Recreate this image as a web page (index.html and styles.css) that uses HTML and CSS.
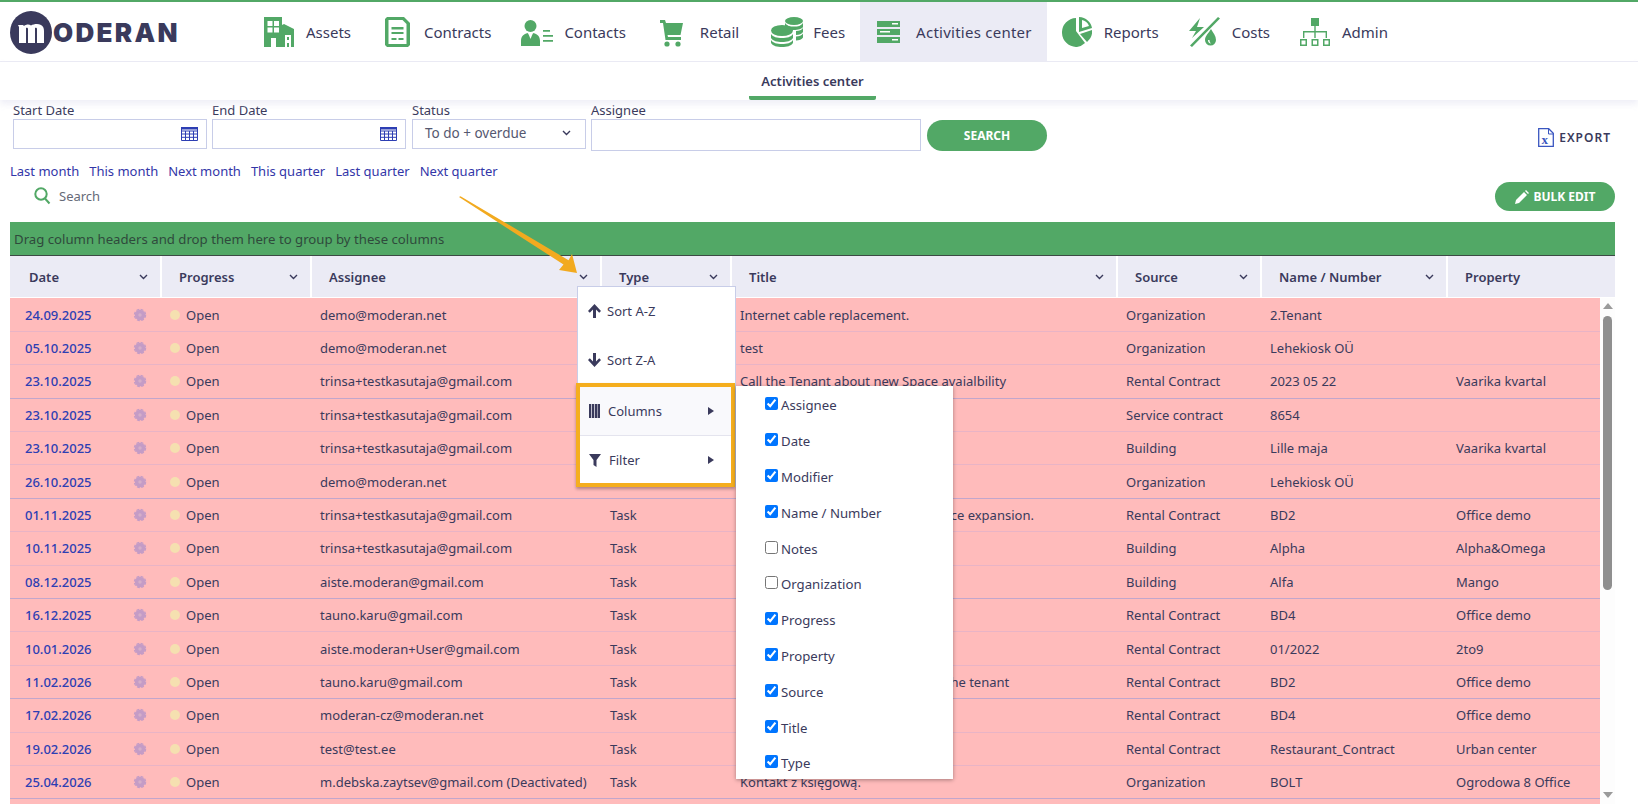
FILE: index.html
```html
<!DOCTYPE html>
<html lang="en">
<head>
    <meta charset="UTF-8">
    <meta name="viewport" content="width=device-width, initial-scale=1.0">
    <title>Activities center</title>
    <link rel="stylesheet" href="styles.css">
</head>
<body>
    <svg class="defs">
        <symbol id="chev" viewBox="0 0 9 6"><path d="M1 1l3.500 3.500L8 1" fill="none" stroke="#3a3a5c" stroke-width="1.400"/></symbol>
        <symbol id="gear" viewBox="0 0 14 14"><circle cx="7" cy="7" r="5.200" fill="#c49cc6"/><circle cx="7" cy="7" r="5.600" fill="none" stroke="#c49cc6" stroke-width="1.300" stroke-dasharray="2.900 1.500"/><circle cx="7" cy="7" r="1.700" fill="#d6aec8"/></symbol>
    </svg>

    <header class="topbar">
        <a class="logo">
            <svg width="42" height="43" viewBox="0 0 42 43"><ellipse cx="21" cy="21.500" rx="21" ry="21.500" fill="#3a3a5c"/><path d="M8 14h5l1 1c2-1.500 5-2 7-.5 3-1.500 7-2 10-.5 2 1 3 3 3 6v12h-7V18c0-1-1-1.500-2-1v15h-7V18c0-1-1-1.500-2-1v15H9V16z" fill="#fff"/></svg>
            <span class="logo-text">ODERAN</span>
        </a>
        <nav class="mainnav">
            <a class="nav-item">
                <svg class="nav-icon" width="30" height="30" viewBox="0 0 30 30"><path d="M0 0h18v8l2-1 10 5v18H0z" fill="#52a866"/><path d="M3.500 4h5v5h-5zM10 4h5v5h-5zM3.500 10.500h5v5h-5zM10 10.500h5v5h-5zM7 21h5v9H7zM21 18h6v12h-2v-4h-2v4h-2zM23 20v3h2v-3z" fill="#fff"/></svg>
                <span>Assets</span>
            </a>
            <a class="nav-item ni-contracts">
                <svg class="nav-icon" width="25" height="30" viewBox="0 0 25 30"><path d="M2 0h17l6 6v22l-2 2H2l-2-2V2z" fill="#52a866"/><path d="M3.500 3h14l4 4v20h-18z" fill="#fff"/><path d="M6.500 10h12v2.500h-12zM6.500 15h12v2h-12zM6.500 21h5v2h-5zM13.500 21h5v2h-5z" fill="#52a866"/></svg>
                <span>Contracts</span>
            </a>
            <a class="nav-item ni-contacts">
                <svg class="nav-icon" width="32" height="30" viewBox="0 0 32 30"><circle cx="9.500" cy="9" r="6" fill="#52a866"/><path d="M0 29v-5c0-5 3-7 6.500-8l3 3 3-3c3.500 1 6.500 3 6.500 8v5z" fill="#52a866"/><path d="M7.500 17h4l-2 5z" fill="#fff"/><path d="M22 13h7v1.800h-7zM22 18h10v1.800H22zM22 23h10v1.800H22z" fill="#52a866"/></svg>
                <span>Contacts</span>
            </a>
            <a class="nav-item ni-retail">
                <svg class="nav-icon" width="23" height="30" viewBox="0 0 23 30"><path d="M0 3h5l1 3h17l-2.500 12H7.500l.5 2h13v3H5.500L3 6H0z" fill="#52a866"/><circle cx="7" cy="27" r="2.600" fill="#52a866"/><circle cx="18" cy="27" r="2.600" fill="#52a866"/></svg>
                <span>Retail</span>
            </a>
            <a class="nav-item ni-fees">
                <svg class="nav-icon" width="33" height="30" viewBox="0 0 33 30"><ellipse cx="23" cy="4" rx="9" ry="4" fill="#52a866"/><path d="M14 6v4c2 2.500 5 3 9 3s8-1 9-3V6c-2 3-5 3.500-9 3.500S16 9 14 6zM25 14v4c3 0 6-1 7-3v-4c-1 2-4 3-7 3zM25 19.500v4c3 0 6-1 7-3v-4c-1 2-4 3-7 3z" fill="#52a866"/><ellipse cx="11" cy="13.500" rx="11" ry="5.500" fill="#52a866"/><path d="M0 17c2 3 6 4 11 4s9-1 11-4v4c-2 3-6 4-11 4S2 24 0 21zM0 23c2 3 6 4 11 4s9-1 11-4v3c-2 3-6 4-11 4S2 29 0 26z" fill="#52a866"/></svg>
                <span>Fees</span>
            </a>
            <a class="nav-item nav-active">
                <svg class="nav-icon" width="23" height="23" viewBox="0 0 23 23"><path d="M0 1h23v6H0zM0 9h23v6H0zM0 17h23v6H0z" fill="#52a866"/><path d="M15 3h6v1.500h-6zM3 11h10v1.500H3zM15 19h6v1.500h-6z" fill="#fff"/></svg>
                <span>Activities center</span>
            </a>
            <a class="nav-item">
                <svg class="nav-icon" width="30" height="30" viewBox="0 0 30 30"><path d="M14 1v13l9 12a15 15 0 0 1-8 4A14.500 14.500 0 0 1 14 1z" fill="#52a866"/><path d="M17 0c7 .5 12 5 13 11l-13 4zM20 3v8l7-2c-1-3-4-5.500-7-6z" fill="#52a866" fill-rule="evenodd"/><path d="M18 17l12-4c.5 4-.5 8-5 12z" fill="#52a866"/></svg>
                <span>Reports</span>
            </a>
            <a class="nav-item">
                <svg class="nav-icon" width="31" height="30" viewBox="0 0 31 30"><path d="M11 1L0 14h7l-4 7 12-11H8zM29 0l2 1.500L3 30l-2-1.500z" fill="#52a866"/><path d="M22 12c2 3.500 5 7 5 11a5.500 5.500 0 0 1-11 0c0-4 4-7.500 6-11zm-3 11c0 2 1 3.500 3 3.500-1-1-1.500-2-1.500-3.500z" fill="#52a866" fill-rule="evenodd"/></svg>
                <span>Costs</span>
            </a>
            <a class="nav-item">
                <svg class="nav-icon" width="30" height="30" viewBox="0 0 30 30"><path d="M11 1h8v8h-8zM14.300 9h1.400v5H27v7h-1.400v-5.600H15.700V21h-1.400v-5.600H4.400V21H3v-7h11.300z" fill="#52a866"/><path d="M0 22h7v7H0zM1.500 23.500v4h4v-4zM11.500 22h7v7h-7zM13 23.500v4h4v-4zM23 22h7v7h-7zM24.500 23.500v4h4v-4z" fill="#52a866" fill-rule="evenodd"/></svg>
                <span>Admin</span>
            </a>
        </nav>
    </header>

    <div class="subbar">
        <a class="subtab">Activities center</a>
    </div>

    <main class="content">
        <form class="filters">
            <div class="field date-field">
                <label>Start Date</label>
                <div class="date-input">
                    <input type="text">
                    <svg class="cal" width="17" height="14" viewBox="0 0 17 14"><path d="M.5.5h16v13H.5zM.5 4h16M.5 7h16M.5 10.300h16M4.500 4v9.500M8.500 4v9.500M12.500 4v9.500" fill="none" stroke="#2d3eb3"/><path d="M0 0h17v2.500H0z" fill="#2d3eb3"/></svg>
                </div>
            </div>
            <div class="field date-field">
                <label>End Date</label>
                <div class="date-input">
                    <input type="text">
                    <svg class="cal" width="17" height="14" viewBox="0 0 17 14"><path d="M.5.5h16v13H.5zM.5 4h16M.5 7h16M.5 10.300h16M4.500 4v9.500M8.500 4v9.500M12.500 4v9.500" fill="none" stroke="#2d3eb3"/><path d="M0 0h17v2.500H0z" fill="#2d3eb3"/></svg>
                </div>
            </div>
            <div class="field status-field">
                <label>Status</label>
                <div class="status-select">
                    <span>To do + overdue</span>
                    <svg width="9" height="6"><use href="#chev"/></svg>
                </div>
            </div>
            <div class="field assignee-field">
                <label>Assignee</label>
                <input type="text">
            </div>
            <button type="button" class="btn-search">SEARCH</button>
            <a class="export">
                <svg width="16" height="19" viewBox="0 0 16 19"><path d="M.7.7h10l4.600 4.600v13H.7z" fill="#fff" stroke="#3a56c0" stroke-width="1.300"/><path d="M10.500 1v5h5" fill="none" stroke="#3a56c0"/><text x="3.500" y="16" class="export-x">x</text></svg>
                <span>EXPORT</span>
            </a>
        </form>

        <div class="quick-links">
            <a>Last month</a>
            <a>This month</a>
            <a>Next month</a>
            <a>This quarter</a>
            <a>Last quarter</a>
            <a>Next quarter</a>
        </div>

        <div class="toolbar">
            <div class="grid-search">
                <svg width="17" height="18" viewBox="0 0 17 18"><circle cx="7" cy="7" r="5.700" fill="none" stroke="#52a866" stroke-width="2"/><path d="M11 11.500l4.500 5" stroke="#52a866" stroke-width="2"/></svg>
                <span>Search</span>
            </div>
            <button type="button" class="btn-bulk">
                <svg width="14" height="14" viewBox="0 0 14 14"><path d="M0 14l1-4 8-8 3 3-8 8zM10 1l1-1 3 3-1 1z" fill="#fff"/></svg>
                BULK EDIT
            </button>
        </div>

        <section class="grid">
            <div class="group-bar">Drag column headers and drop them here to group by these columns</div>
            <div class="grid-head">
                <div class="th"><span>Date</span><svg width="9" height="6"><use href="#chev"/></svg></div>
                <div class="th"><span>Progress</span><svg width="9" height="6"><use href="#chev"/></svg></div>
                <div class="th"><span>Assignee</span><svg width="9" height="6"><use href="#chev"/></svg></div>
                <div class="th"><span>Type</span><svg width="9" height="6"><use href="#chev"/></svg></div>
                <div class="th"><span>Title</span><svg width="9" height="6"><use href="#chev"/></svg></div>
                <div class="th"><span>Source</span><svg width="9" height="6"><use href="#chev"/></svg></div>
                <div class="th"><span>Name / Number</span><svg width="9" height="6"><use href="#chev"/></svg></div>
                <div class="th"><span>Property</span></div>
            </div>
            <div class="grid-body">
                <div class="rows">
                    <div class="row"><div class="td date"><a>24.09.2025</a><svg width="14" height="14"><use href="#gear"/></svg></div><div class="td progress"><i class="dot"></i>Open</div><div class="td">demo@moderan.net</div><div class="td"></div><div class="td">Internet cable replacement.</div><div class="td">Organization</div><div class="td">2.Tenant</div><div class="td"></div></div>
                    <div class="row"><div class="td date"><a>05.10.2025</a><svg width="14" height="14"><use href="#gear"/></svg></div><div class="td progress"><i class="dot"></i>Open</div><div class="td">demo@moderan.net</div><div class="td"></div><div class="td">test</div><div class="td">Organization</div><div class="td">Lehekiosk OÜ</div><div class="td"></div></div>
                    <div class="row"><div class="td date"><a>23.10.2025</a><svg width="14" height="14"><use href="#gear"/></svg></div><div class="td progress"><i class="dot"></i>Open</div><div class="td">trinsa+testkasutaja@gmail.com</div><div class="td"></div><div class="td">Call the Tenant about new Space avaialbility</div><div class="td">Rental Contract</div><div class="td">2023 05 22</div><div class="td">Vaarika kvartal</div></div>
                    <div class="row"><div class="td date"><a>23.10.2025</a><svg width="14" height="14"><use href="#gear"/></svg></div><div class="td progress"><i class="dot"></i>Open</div><div class="td">trinsa+testkasutaja@gmail.com</div><div class="td"></div><div class="td"></div><div class="td">Service contract</div><div class="td">8654</div><div class="td"></div></div>
                    <div class="row"><div class="td date"><a>23.10.2025</a><svg width="14" height="14"><use href="#gear"/></svg></div><div class="td progress"><i class="dot"></i>Open</div><div class="td">trinsa+testkasutaja@gmail.com</div><div class="td"></div><div class="td"></div><div class="td">Building</div><div class="td">Lille maja</div><div class="td">Vaarika kvartal</div></div>
                    <div class="row"><div class="td date"><a>26.10.2025</a><svg width="14" height="14"><use href="#gear"/></svg></div><div class="td progress"><i class="dot"></i>Open</div><div class="td">demo@moderan.net</div><div class="td"></div><div class="td"></div><div class="td">Organization</div><div class="td">Lehekiosk OÜ</div><div class="td"></div></div>
                    <div class="row"><div class="td date"><a>01.11.2025</a><svg width="14" height="14"><use href="#gear"/></svg></div><div class="td progress"><i class="dot"></i>Open</div><div class="td">trinsa+testkasutaja@gmail.com</div><div class="td">Task</div><div class="td">Call the Tenant about an office space expansion.</div><div class="td">Rental Contract</div><div class="td">BD2</div><div class="td">Office demo</div></div>
                    <div class="row"><div class="td date"><a>10.11.2025</a><svg width="14" height="14"><use href="#gear"/></svg></div><div class="td progress"><i class="dot"></i>Open</div><div class="td">trinsa+testkasutaja@gmail.com</div><div class="td">Task</div><div class="td"></div><div class="td">Building</div><div class="td">Alpha</div><div class="td">Alpha&amp;Omega</div></div>
                    <div class="row"><div class="td date"><a>08.12.2025</a><svg width="14" height="14"><use href="#gear"/></svg></div><div class="td progress"><i class="dot"></i>Open</div><div class="td">aiste.moderan@gmail.com</div><div class="td">Task</div><div class="td"></div><div class="td">Building</div><div class="td">Alfa</div><div class="td">Mango</div></div>
                    <div class="row"><div class="td date"><a>16.12.2025</a><svg width="14" height="14"><use href="#gear"/></svg></div><div class="td progress"><i class="dot"></i>Open</div><div class="td">tauno.karu@gmail.com</div><div class="td">Task</div><div class="td"></div><div class="td">Rental Contract</div><div class="td">BD4</div><div class="td">Office demo</div></div>
                    <div class="row"><div class="td date"><a>10.01.2026</a><svg width="14" height="14"><use href="#gear"/></svg></div><div class="td progress"><i class="dot"></i>Open</div><div class="td">aiste.moderan+User@gmail.com</div><div class="td">Task</div><div class="td"></div><div class="td">Rental Contract</div><div class="td">01/2022</div><div class="td">2to9</div></div>
                    <div class="row"><div class="td date"><a>11.02.2026</a><svg width="14" height="14"><use href="#gear"/></svg></div><div class="td progress"><i class="dot"></i>Open</div><div class="td">tauno.karu@gmail.com</div><div class="td">Task</div><div class="td">Send the contract renewal info to the tenant</div><div class="td">Rental Contract</div><div class="td">BD2</div><div class="td">Office demo</div></div>
                    <div class="row"><div class="td date"><a>17.02.2026</a><svg width="14" height="14"><use href="#gear"/></svg></div><div class="td progress"><i class="dot"></i>Open</div><div class="td">moderan-cz@moderan.net</div><div class="td">Task</div><div class="td"></div><div class="td">Rental Contract</div><div class="td">BD4</div><div class="td">Office demo</div></div>
                    <div class="row"><div class="td date"><a>19.02.2026</a><svg width="14" height="14"><use href="#gear"/></svg></div><div class="td progress"><i class="dot"></i>Open</div><div class="td">test@test.ee</div><div class="td">Task</div><div class="td"></div><div class="td">Rental Contract</div><div class="td">Restaurant_Contract</div><div class="td">Urban center</div></div>
                    <div class="row"><div class="td date"><a>25.04.2026</a><svg width="14" height="14"><use href="#gear"/></svg></div><div class="td progress"><i class="dot"></i>Open</div><div class="td">m.debska.zaytsev@gmail.com (Deactivated)</div><div class="td">Task</div><div class="td">Kontakt z księgową.</div><div class="td">Organization</div><div class="td">BOLT</div><div class="td">Ogrodowa 8 Office</div></div>
                    <div class="row"></div>
                </div>
                <div class="scrollbar">
                    <i class="sb-up"></i>
                    <i class="sb-thumb"></i>
                    <i class="sb-down"></i>
                </div>
            </div>

            <div class="col-menu">
                <a class="menu-item"><svg width="13" height="14" viewBox="0 0 13 14"><path d="M6.500 0L13 7l-1.800 1.800L8 5.500V14H5V5.500L1.800 8.800 0 7z" fill="#3a3a5c"/></svg>Sort A-Z</a>
                <a class="menu-item menu-lower"><svg width="13" height="14" viewBox="0 0 13 14"><path d="M6.500 14L13 7l-1.800-1.800L8 8.500V0H5v8.500L1.800 5.200 0 7z" fill="#3a3a5c"/></svg>Sort Z-A</a>
                <div class="menu-marked">
                    <a class="menu-item menu-sub menu-hover"><svg width="11" height="14" viewBox="0 0 11 14"><path d="M0 0h2.300v14H0zM3 0h2.300v14H3zM6 0h2.300v14H6zM8.800 0H11v14H8.800z" fill="#3a3a5c"/></svg>Columns<i class="caret"></i></a>
                    <a class="menu-item menu-sub"><svg width="12" height="14" viewBox="0 0 12 14"><path d="M0 1h12L7.500 7v7l-3-2V7z" fill="#3a3a5c"/></svg>Filter<i class="caret"></i></a>
                </div>
            </div>

            <div class="col-list">
                <label><input type="checkbox" checked>Assignee</label>
                <label><input type="checkbox" checked>Date</label>
                <label><input type="checkbox" checked>Modifier</label>
                <label><input type="checkbox" checked>Name / Number</label>
                <label><input type="checkbox">Notes</label>
                <label><input type="checkbox">Organization</label>
                <label><input type="checkbox" checked>Progress</label>
                <label><input type="checkbox" checked>Property</label>
                <label><input type="checkbox" checked>Source</label>
                <label><input type="checkbox" checked>Title</label>
                <label><input type="checkbox" checked>Type</label>
            </div>
        </section>
    </main>

    <svg class="callout" width="130" height="85" viewBox="455 195 130 85"><path d="M459 197l1.500-.8 108 64 3.500-6.200 5 19-18-3 4.500-5.500z" fill="#f2aa1f"/></svg>
</body>
</html>
```

FILE: styles.css
```css
* {
    box-sizing: border-box;
}

html, body {
    height: 804px;
    overflow: hidden;
}

body {
    margin: 0;
    background-color: #fff;
    color: #3a3a5c;
    font-family: "Noto Sans", sans-serif;
    font-size: 13px;
}

.defs {
    position: absolute;
    width: 0;
    height: 0;
}

/* top navigation */
.topbar {
    display: flex;
    height: 62px;
    border-top: 2px solid #52a866;
    border-bottom: 1px solid #ebebf5;
}

.logo {
    display: flex;
    align-items: center;
    width: 249px;
    padding: 5px 0 0 10px;
    height: 56px;
}

.logo-text {
    font-family: Inter, sans-serif;
    font-size: 26px;
    font-weight: 900;
    line-height: 1;
    letter-spacing: 2.3px;
    margin-left: 1px;
}

.mainnav {
    display: flex;
}

.nav-item {
    display: flex;
    align-items: center;
    padding: 0 15px;
    font-size: 15px;
}

.nav-icon {
    margin-right: 12px;
    flex: none;
}

.ni-contracts .nav-icon {
    margin-left: 4px;
    margin-right: 14px;
}

.ni-contacts .nav-icon {
    margin-right: 11px;
}

.ni-retail .nav-icon {
    margin-left: 4px;
    margin-right: 17px;
}

.ni-fees .nav-icon {
    margin-left: 2px;
    margin-right: 9px;
}

.nav-active {
    background-color: #ebebf5;
    letter-spacing: 0.25px;
}

.nav-active .nav-icon {
    margin-left: 2px;
    margin-right: 16px;
}

.subbar {
    display: flex;
    justify-content: center;
    height: 38px;
    padding-right: 13px;
    box-shadow: 0 4px 6px rgba(235, 235, 245, 0.8);
    position: relative;
}

.subtab {
    width: 127px;
    padding-top: 10px;
    border-bottom: 4px solid #52a866;
    border-radius: 0 0 2px 2px;
    text-align: center;
    font-size: 13px;
    font-weight: 600;
}

/* filter form */
.content {
    padding: 1px 23px 0 10px;
}

.filters {
    display: flex;
    align-items: flex-end;
    padding-left: 3px;
    height: 50px;
}

.field label {
    display: block;
    height: 18px;
    line-height: 18px;
}

.field input {
    display: block;
    width: 100%;
    height: 30px;
    border: 1px solid #c8cde8;
    outline: none;
}

.date-field {
    width: 194px;
    margin-right: 5px;
    margin-bottom: 2px;
}

.date-input {
    position: relative;
}

.cal {
    position: absolute;
    right: 9px;
    top: 8px;
}

.status-field {
    width: 174px;
    margin-left: 1px;
    margin-right: 5px;
    margin-bottom: 2px;
}

.status-select {
    display: flex;
    align-items: center;
    justify-content: space-between;
    height: 30px;
    padding: 0 14px 2px 12px;
    border: 1px solid #c8cde8;
    color: #555870;
    font-size: 13.5px;
}

.assignee-field {
    width: 330px;
}

.assignee-field input {
    height: 32px;
}

.btn-search {
    width: 120px;
    height: 31px;
    margin-left: 6px;
    border: none;
    border-radius: 16px;
    background-color: #52a866;
    color: #fff;
    font-family: inherit;
    font-size: 12px;
    font-weight: 700;
}

.export {
    display: flex;
    align-items: center;
    gap: 5px;
    margin-left: auto;
    margin-right: 4px;
    margin-bottom: 4px;
    font-size: 12px;
    font-weight: 600;
    letter-spacing: 1px;
}

.export-x {
    font-family: "Liberation Serif", serif;
    font-size: 13px;
    font-weight: 700;
    fill: #3a56c0;
}

.quick-links {
    display: flex;
    gap: 10px;
    height: 18px;
    margin-top: 11px;
    line-height: 18px;
    color: #3336a8;
}

.toolbar {
    display: flex;
    align-items: center;
    justify-content: space-between;
    height: 29px;
    margin-top: 2px;
    padding-left: 24px;
}

.grid-search {
    display: flex;
    align-items: center;
    gap: 8px;
    padding-bottom: 2px;
    color: #666a78;
}

.btn-bulk {
    display: flex;
    align-items: center;
    justify-content: center;
    gap: 5px;
    width: 120px;
    height: 29px;
    border: none;
    border-radius: 15px;
    background-color: #52a866;
    color: #fff;
    font-family: inherit;
    font-size: 12px;
    font-weight: 700;
}

/* data grid */
.grid {
    position: relative;
    margin-top: 11px;
}

.group-bar {
    height: 34px;
    padding-left: 4px;
    border-bottom: 1px solid #3c4a44;
    background-color: #52a866;
    color: #2f4a3c;
    font-size: 13.2px;
    line-height: 34px;
}

.grid-head,
.row {
    display: grid;
}

.grid-head {
    grid-template-columns: 150px 150px 290px 130px 386px 144px 186px 169px;
    height: 42px;
    border-bottom: 1px solid #fff;
}

.th {
    display: flex;
    align-items: center;
    justify-content: space-between;
    padding: 0 12px 0 17px;
    background-color: #ebebf5;
    border-left: 2px solid #fff;
    font-weight: 600;
}

.th:first-child {
    padding-left: 19px;
    border-left: none;
}

.grid-body {
    display: flex;
    height: 506px;
    overflow: hidden;
}

.rows {
    width: 1590px;
    padding-top: 0.5px;
    background-color: #ffbbbb;
}

.row {
    grid-template-columns: 150px 150px 290px 130px 386px 144px 186px 154px;
    height: 33.4px;
    border-bottom: 1px solid #e8b4c6;
}

.row:nth-child(3n) {
    border-bottom-color: #c2a6cc;
}

.td {
    display: flex;
    align-items: center;
    padding-left: 10px;
    white-space: nowrap;
    overflow: hidden;
}

.date {
    justify-content: space-between;
    padding: 0 13px 0 15px;
}

.date a {
    color: #2d3eb3;
    font-weight: 500;
}

.dot {
    width: 10px;
    height: 10px;
    margin-right: 6px;
    border-radius: 50%;
    background-color: #f5e0b0;
}

.scrollbar {
    display: flex;
    flex-direction: column;
    align-items: center;
    width: 15px;
    padding: 5px 0 6px;
    background-color: #fdfdfd;
}

.sb-up,
.sb-down {
    width: 0;
    height: 0;
    border-left: 5px solid transparent;
    border-right: 5px solid transparent;
}

.sb-up {
    border-bottom: 6px solid #9a9a9a;
}

.sb-down {
    margin-top: auto;
    border-top: 6px solid #9a9a9a;
}

.sb-thumb {
    width: 9px;
    height: 274px;
    margin-top: 7px;
    border-radius: 5px;
    background-color: #8f8f8f;
}

/* column menu */
.col-menu {
    position: absolute;
    left: 567px;
    top: 64px;
    width: 159px;
    border: 1px solid #c8cde8;
    border-bottom: none;
    background-color: #fff;
}

.menu-item {
    display: flex;
    align-items: center;
    gap: 6px;
    height: 48px;
    padding-left: 10px;
}

.menu-lower {
    padding-top: 2px;
}

.menu-marked {
    margin: 0 0 0 -2px;
    width: 159px;
    border: 4px solid #f5ae1e;
    background-color: #fff;
    box-shadow: 0 2px 3px rgba(0, 0, 0, 0.3);
}

.menu-sub {
    position: relative;
    gap: 8px;
    padding-left: 9px;
}

.menu-sub + .menu-sub {
    border-top: 1px solid #e4e4ee;
}

.menu-hover {
    background-color: #f9f9fc;
}

.caret {
    position: absolute;
    right: 17px;
    top: 50%;
    margin-top: -4px;
    border-left: 6px solid #3a3a5c;
    border-top: 4px solid transparent;
    border-bottom: 4px solid transparent;
}

.col-list {
    position: absolute;
    left: 726px;
    top: 164px;
    width: 217px;
    height: 393px;
    padding-top: 1.5px;
    background-color: #fff;
    box-shadow: 0 1px 4px rgba(0, 0, 0, 0.35);
}

.col-list label {
    display: flex;
    align-items: center;
    gap: 3px;
    height: 35.8px;
    padding-left: 29px;
    font-size: 13.2px;
}

.col-list input {
    margin: -3px 0 0;
    accent-color: #0075ff;
}

.callout {
    position: absolute;
    left: 455px;
    top: 195px;
}
```
